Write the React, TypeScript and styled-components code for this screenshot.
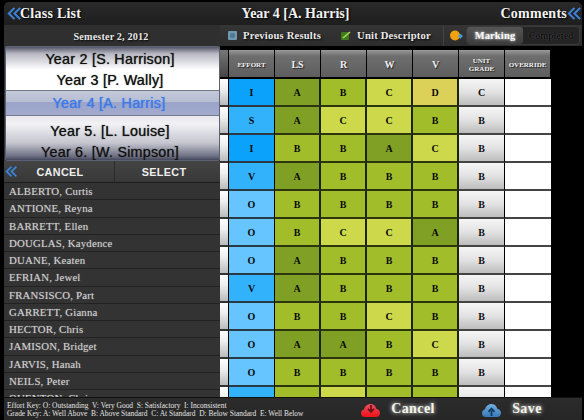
import React from "react";
import styled, { createGlobalStyle } from "styled-components";

const Global = createGlobalStyle`
  html, body { margin: 0; padding: 0; background: #000; }
  #root { width: 584px; height: 420px; overflow: hidden; }
`;
const serif = `"Liberation Serif", "Times New Roman", serif`;
const sans = `"Liberation Sans", Arial, sans-serif`;

const Screen = styled.div`
  width: 584px; height: 420px; background: #000; padding: 2px 2px 0 4px; box-sizing: border-box;
  display: flex; flex-direction: column; font-family: ${serif}; overflow: hidden;
`;
const Header = styled.header`
  height: 23px; flex: none; display: grid; grid-template-columns: 1fr auto 1fr; align-items: center;
  background: linear-gradient(#2a2a2a, #1e1e1e); border-radius: 5px 5px 0 0; padding: 0 0 0 3px;
  color: #f2f2f2; font-size: 14px; font-weight: bold; text-shadow: 1px 1px 2px #000;
`;
const HeaderSide = styled.div<{ $right?: boolean }>`
  display: flex; align-items: center; justify-content: ${p => (p.$right ? "flex-end" : "flex-start")}; letter-spacing: .25px;
  & svg { margin-right: ${p => (p.$right ? "0" : "-2px")}; }
`;
const Title = styled.div`margin-left: 2px; letter-spacing: 0;`;
const Body = styled.main`flex: 1; min-height: 0; display: flex; overflow: hidden;`;
const Left = styled.section`width: 216px; flex: none; display: flex; flex-direction: column; background: #333;`;
const Semester = styled.div`
  height: 21px; flex: none; display: flex; align-items: center; justify-content: center; padding: 2px 2px 0 0; box-sizing: border-box;
  background: #2f2f2f; color: #e8e8e8; font-size: 10.2px; font-weight: bold; letter-spacing: .15px; text-shadow: 1px 1px 2px #000;
`;
const Picker = styled.div`
  height: 115px; flex: none; margin-left: 1px; padding-right: 5px; box-sizing: border-box; border: 1px solid #5b6176; border-radius: 2px;
  position: relative; overflow: hidden; display: flex; flex-direction: column; align-items: center;
  background: linear-gradient(#555768 0, #b8b9c3 6%, #fff 20%, #fff 38%, #e9e9ee 62%, #f2f2f5 68%, #c4c5cf 85%, #6a6c80 97%, #43465a 100%);
`;
const PickItem = styled.div<{ $top: number }>`
  height: 20px; margin-top: ${p => p.$top}px; color: #111; font: 500 14.3px/20px ${sans}; letter-spacing: .25px; text-shadow: 0 0 1px #333;
`;
const PickBand = styled.div`
  position: absolute; left: 0; right: 0; top: 43px; height: 26px; box-sizing: border-box; padding-right: 7px;
  border-top: 1px solid #737a8f; border-bottom: 1px solid #737a8f;
  background: linear-gradient(#c3c9d8 0, #b7bdd2 47%, #9aa3c8 48%, #a3abcf 100%);
  color: #3d7ae8; text-align: center; font: 500 14.3px/25px ${sans}; letter-spacing: .25px; text-shadow: 0 0 1px #3d7ae8;
`;
const ActionBar = styled.div`
  height: 22px; flex: none; display: grid; grid-template-columns: 111px 1fr; background: linear-gradient(#444, #383838); border-bottom: 1px solid #1b1b1b; box-sizing: border-box;
`;
const ActionCell = styled.div<{ $first?: boolean }>`
  position: relative; display: flex; align-items: center; justify-content: center; color: #eee; font: bold 10.8px ${sans}; letter-spacing: .35px;
  border-right: ${p => (p.$first ? "1px solid #2c2c2c" : "none")}; padding: ${p => (p.$first ? "0 0 0 2px" : "0 7px 0 0")};
  & svg { position: absolute; left: 1px; top: 4px; }
`;
const Students = styled.div`flex: 1; min-height: 0; overflow: hidden;`;
const Student = styled.div`
  height: 17.25px; line-height: 17px; box-sizing: border-box; padding-left: 5px; border-bottom: 1px solid #222; background: #333;
  color: #cecece; font-size: 10.8px; letter-spacing: .2px; white-space: nowrap; text-shadow: 0 0 1px #888;
`;
const Right = styled.section`flex: 1; min-width: 0; display: flex; flex-direction: column; background: #000;`;
const Toolbar = styled.div`
  height: 21px; width: 362px; flex: none; display: flex; align-items: center; background: linear-gradient(#353535, #2c2c2c);
  color: #e9e9e9; font-size: 10.6px; font-weight: bold; letter-spacing: .2px; text-shadow: 1px 1px 2px #000; padding-left: 8px; box-sizing: border-box;
`;
const ToolItem = styled.div<{ $gap: number }>`display: flex; align-items: center; gap: 6px; margin-right: ${p => p.$gap}px;`;
const Divider = styled.div`width: 1px; height: 20px; background: #444; margin-right: 6px;`;
const Segment = styled.div`
  margin-left: 3px; height: 19px; flex: none; width: 114px; display: grid; grid-template-columns: 56px 1fr; background: #242424; border: 1px solid #3a3a3a; border-radius: 4px; box-sizing: border-box;
`;
const SegOn = styled.div`
  display: flex; align-items: center; justify-content: center; border-radius: 3px; background: linear-gradient(#555, #3c3c3c); color: #fafafa; font-size: 10.4px; text-shadow: 0 0 3px #fff;
`;
const SegOff = styled.div`display: flex; align-items: center; justify-content: center; color: #0a0a0a; font-size: 9.6px; letter-spacing: 0; text-shadow: 0 0 1px #6a6a6a;`;
const GridWrap = styled.div`flex: 1; min-height: 0; overflow: hidden; padding-top: 4px;`;
const Table = styled.div`
  display: grid; grid-template-columns: 9px repeat(7, 46px); grid-template-rows: 29px; grid-auto-rows: 28px; width: 331px;
`;
const HeadCell = styled.div<{ $small?: boolean }>`
  box-sizing: border-box; border-right: 1px solid #000; border-bottom: 2px solid #000; padding-top: 2px;
  background: linear-gradient(#9a9a9a 0, #6e6e6e 22%, #5e5e5e 100%);
  display: flex; align-items: center; justify-content: center; text-align: center; color: #efefef;
  font-size: ${p => (p.$small ? "7px" : "10px")}; line-height: 8px; font-weight: bold; text-shadow: 1px 1px 1px #222;
`;
const Stub = styled.div`
  box-sizing: border-box; border-right: 1px solid #000; border-bottom: 2px solid #333;
  background: linear-gradient(#fff, #eee 40%, #bbb);
`;
const StubHead = styled(HeadCell)`background: linear-gradient(#777, #444);`;
const effort: Record<string, string> = { I: "#0aa2fa", S: "#33b2fc", V: "#33b2fc", O: "#66c4ff" };
const Effort = styled.div<{ $g: string }>`
  background: ${p => effort[p.$g] || "#33b2fc"}; border-right: 1px solid #000; border-bottom: 2px solid #2a3a44; box-sizing: border-box; padding-top: 1px;
  display: flex; align-items: center; justify-content: center; color: #0a0a0a; font-size: 10px; font-weight: bold;
`;
const grade: Record<string, string> = { A: "#7fa024", B: "#a1bd2a", C: "#cdd84a", D: "#dcd158" };
const Grade = styled.div<{ $g: string }>`
  background: ${p => grade[p.$g]}; border-right: 2px solid #1c2409; border-bottom: 2px solid #2b3510; box-sizing: border-box; padding-top: 1px;
  display: flex; align-items: center; justify-content: center; color: #0a0a0a; font-size: 10px; font-weight: bold;
`;
const Unit = styled.div`
  background: linear-gradient(#f6f6f6, #e2e2e2 50%, #bdbdbd); border-right: 1px solid #000; border-bottom: 2px solid #444; box-sizing: border-box; padding-top: 1px;
  display: flex; align-items: center; justify-content: center; color: #111; font-size: 10px; font-weight: bold;
`;
const Override = styled.div`background: #fff; border-bottom: 2px solid #444; box-sizing: border-box;`;
const Footer = styled.footer`
  height: 23px; flex: none; display: flex; align-items: center; background: linear-gradient(#2c2c2c, #262626); border-top: 1px solid #111; box-sizing: border-box;
`;
const Keys = styled.div`
  width: 345px; flex: none; padding: 2px 0 0 3px; box-sizing: border-box; color: #e4e4e4; font-size: 7.45px; line-height: 8px; white-space: pre;
`;
const FootButton = styled.div<{ $w: number }>`
  width: ${p => p.$w}px; flex: none; display: flex; align-items: center; justify-content: center; gap: 11px;
  color: #f4f4e8; font-size: 14px; font-weight: bold; letter-spacing: .4px; text-shadow: 0 0 4px #fff; height: 100%;
`;
const Chevrons = ({ size = 15 }: { size?: number }) => (
  <svg width={size} height={size} viewBox="0 0 16 16" fill="none" stroke="#3b82d8" strokeWidth="2.2" aria-hidden>
    <path d="M8 2 2 8l6 6M14 2 8 8l6 6" />
  </svg>
);
const Cloud = ({ from, to, arrow, up }: { from: string; to: string; arrow: string; up?: boolean }) => {
  const id = `c${from.slice(1)}`;
  return (
    <svg width="19" height="15" viewBox="0 0 19 15" aria-hidden>
      <defs>
        <linearGradient id={id} x1="0" y1="0" x2="0" y2="1"><stop offset="0" stopColor={from} /><stop offset="1" stopColor={to} /></linearGradient>
      </defs>
      <path d="M4 15C1.5 15 0 13.3 0 11.2 0 9.2 1.3 7.8 3 7.6 3.4 4.6 6 2 9.5 2c2.9 0 5.1 1.9 5.8 4.7 2.2.2 3.7 2.1 3.7 4.2 0 2.3-1.6 4.1-4 4.1Z" fill={`url(#${id})`} />
      <path d={up ? "M9.5 14V8.5M6.5 9.8 9.5 6.5l3 3.3" : "M10 3v6M7 6.8 10 10l3-3.2"} stroke={arrow} strokeWidth="1.8" fill="none" />
    </svg>
  );
};
const names = ["ALBERTO, Curtis","ANTIONE, Reyna","BARRETT, Ellen","DOUGLAS, Kaydence","DUANE, Keaten","EFRIAN, Jewel","FRANSISCO, Part","GARRETT, Gianna","HECTOR, Chris","JAMISON, Bridget","JARVIS, Hanah","NEILS, Peter","QUENTON, Chris"];
const rows = ["IABCDC","SACCBB","IBBACB","VABBBB","OBBBBB","OBCCAB","OABBBB","VABBBB","OBBCBB","OAABCB","OBBBBB","SBCBB "];
const heads = ["LS","R","W","V"];

export default function App() {
  return (
    <Screen>
      <Global />
      <Header>
        <HeaderSide><Chevrons />Class List</HeaderSide>
        <Title>Year 4 [A. Harris]</Title>
        <HeaderSide $right>Comments<Chevrons /></HeaderSide>
      </Header>
      <Body>
        <Left>
          <Semester>Semester 2, 2012</Semester>
          <Picker>
            <PickItem $top={2}>Year 2 [S. Harrison]</PickItem>
            <PickItem $top={1}>Year 3 [P. Wally]</PickItem>
            <PickBand>Year 4 [A. Harris]</PickBand>
            <PickItem $top={31}>Year 5. [L. Louise]</PickItem>
            <PickItem $top={1}>Year 6. [W. Simpson]</PickItem>
          </Picker>
          <ActionBar>
            <ActionCell $first><Chevrons size={13} />CANCEL</ActionCell>
            <ActionCell>SELECT</ActionCell>
          </ActionBar>
          <Students>{names.map(s => <Student key={s}>{s}</Student>)}</Students>
        </Left>
        <Right>
          <Toolbar>
            <ToolItem $gap={20}>
              <svg width="9" height="9" viewBox="0 0 9 9" aria-hidden><rect width="9" height="9" rx="1" fill="#6f97ad" /><circle cx="4.5" cy="4.5" r="2.5" fill="#4d7890" /></svg>
              Previous Results
            </ToolItem>
            <ToolItem $gap={12}>
              <svg width="10" height="10" viewBox="0 0 10 10" aria-hidden><rect y="1" width="8" height="8" rx="1" fill="#3d7a20" /><path d="M2 7 9 1" stroke="#b4d94a" strokeWidth="1.6" /></svg>
              Unit Descriptor
            </ToolItem>
            <Divider />
            <svg width="13" height="11" viewBox="0 0 13 11" aria-hidden><circle cx="5" cy="5.5" r="5" fill="#f0a010" /><path d="M10 3.5 13 6l-3 3-2-3Z" fill="#4a9ad0" /></svg>
            <Segment><SegOn>Marking</SegOn><SegOff>Completed</SegOff></Segment>
          </Toolbar>
          <GridWrap>
            <Table>
              <StubHead />
              <HeadCell $small>EFFORT</HeadCell>
              {heads.map(h => <HeadCell key={h}>{h}</HeadCell>)}
              <HeadCell $small>UNIT<br />GRADE</HeadCell>
              <HeadCell $small>OVERRIDE</HeadCell>
              {rows.map((r, i) => (
                <React.Fragment key={i}>
                  <Stub />
                  <Effort $g={r[0]}>{i < 11 ? r[0] : ""}</Effort>
                  {[1, 2, 3, 4].map(c => <Grade key={c} $g={r[c]}>{i < 11 ? r[c] : ""}</Grade>)}
                  <Unit>{i < 11 ? r[5] : ""}</Unit>
                  <Override />
                </React.Fragment>
              ))}
            </Table>
          </GridWrap>
        </Right>
      </Body>
      <Footer>
        <Keys>
          {"Effort Key: O: Outstanding  V: Very Good  S: Satisfactory  I: Inconsistent\nGrade Key: A: Well Above  B: Above Standard  C: At Standard  D: Below Standard  E: Well Below"}
        </Keys>
        <FootButton $w={98}><Cloud from="#e85060" to="#f01018" arrow="#701018" />Cancel</FootButton>
        <FootButton $w={130}><Cloud from="#70b0e0" to="#3a78b8" arrow="#123a60" up />Save</FootButton>
      </Footer>
    </Screen>
  );
}
